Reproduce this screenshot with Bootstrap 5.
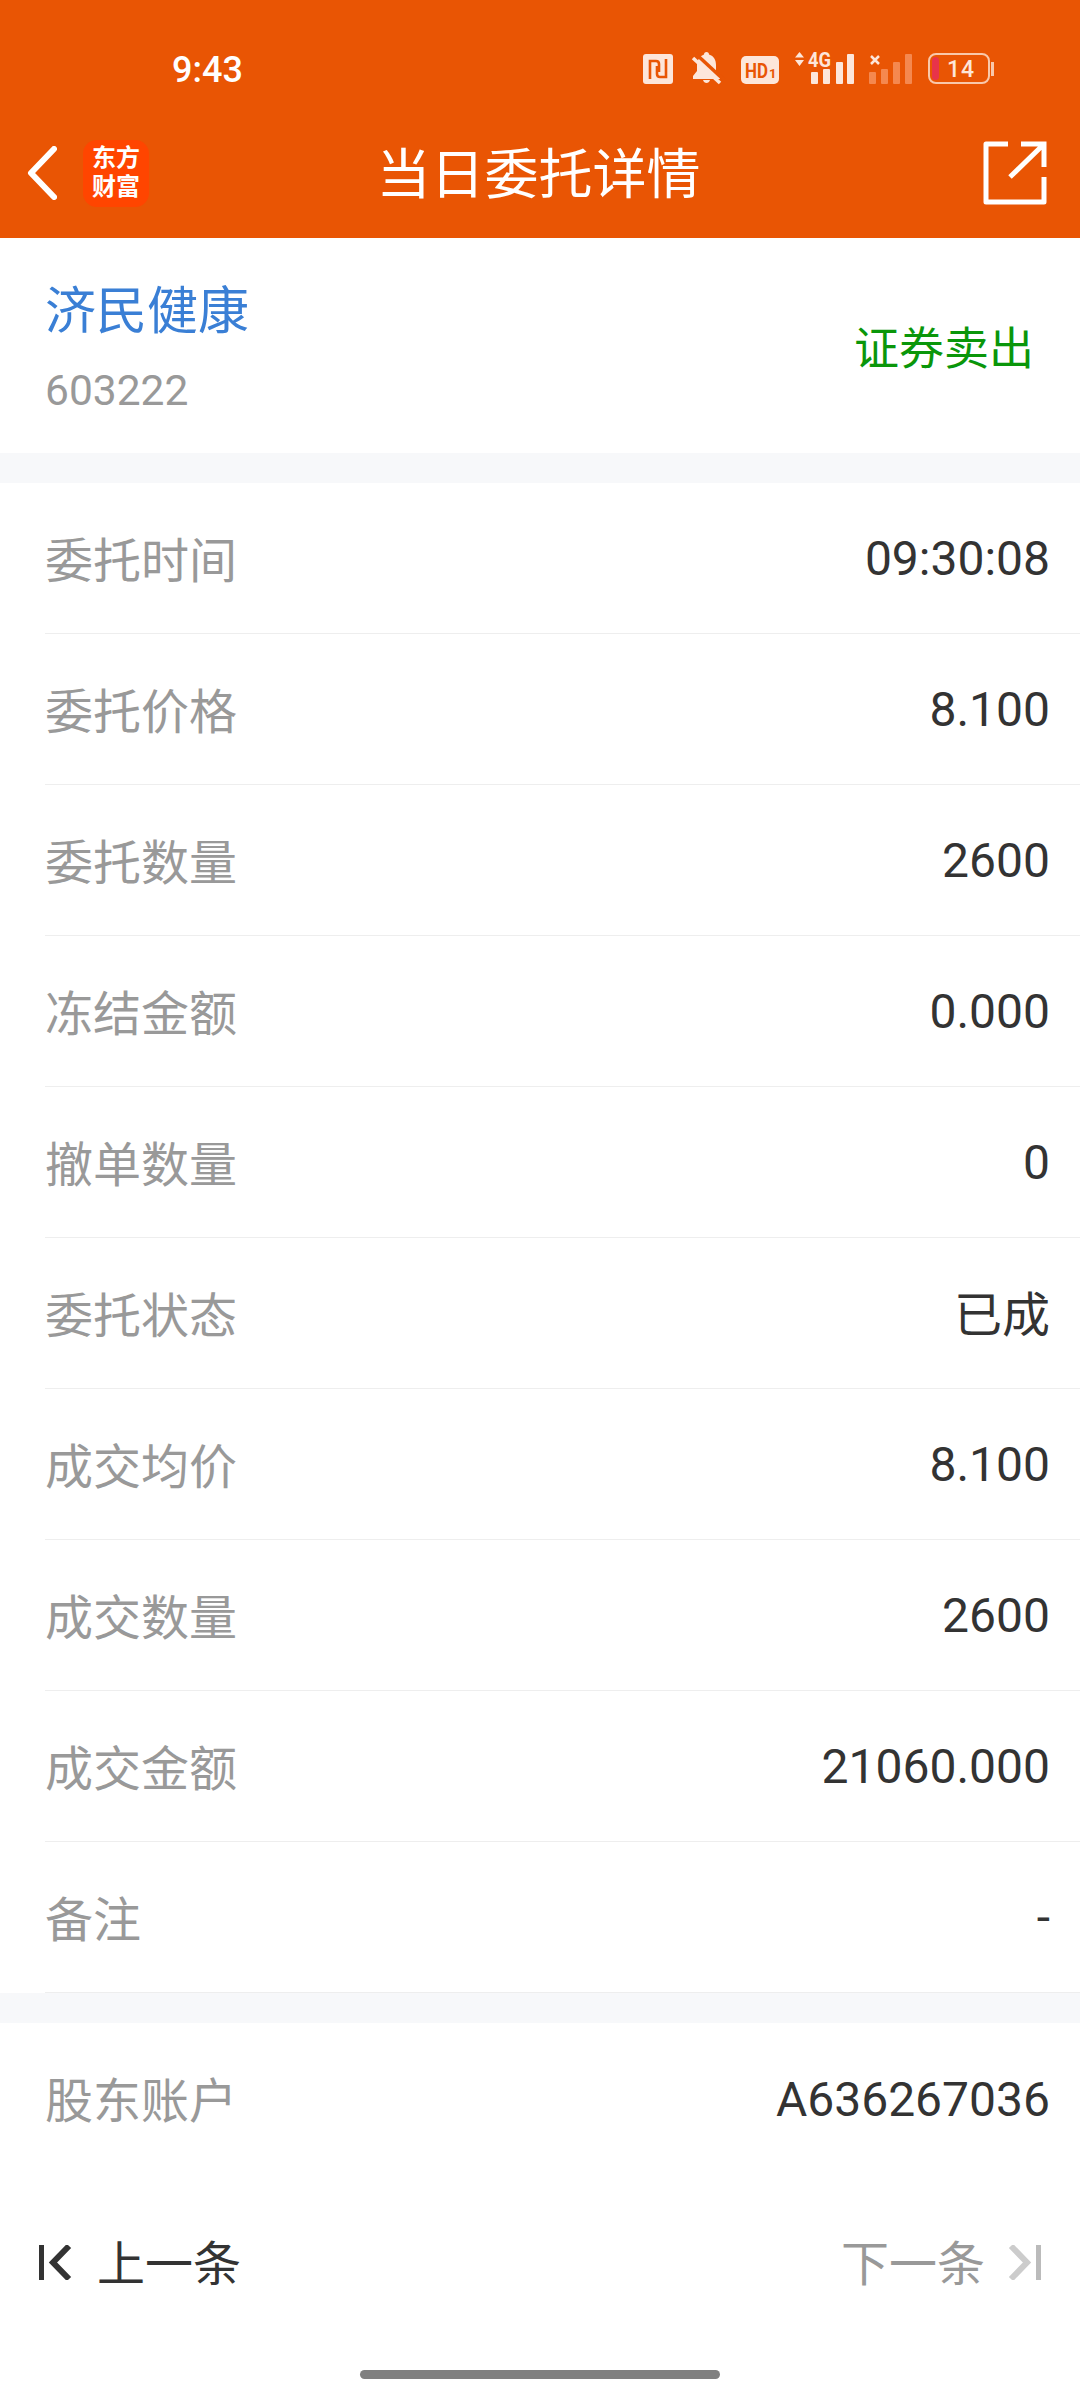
<!DOCTYPE html>
<html lang="zh-CN">
<head>
    <meta charset="UTF-8">
    <meta name="viewport" content="width=device-width, initial-scale=1.0">
    <title>当日委托详情</title>
    <link href="https://cdn.jsdelivr.net/npm/bootstrap@5.3.0/dist/css/bootstrap.min.css" rel="stylesheet">
    <style>
        body {
            font-family: Roboto, "Noto Sans CJK SC", sans-serif;
            background: #fff;
            color: #333;
        }
        .top-area { background: #e95504; color: #fff; }
        .status-bar { height: 108px; padding: 32px 86px 0 172px; }
        .status-inner { height: 76px; }
        .status-time { font-size: 36px; font-weight: 500; line-height: 1; }
        .status-icons { gap: 16px; margin-bottom: 4px; }
        .status-icons svg { display: block; overflow: visible; }
        .status-icons .gap-wide { margin-left: 2px; }
        .status-icons .gap-tight { margin-left: -1px; }
        .nav-bar { height: 130px; padding: 0 33px 0 27px; }
        .nav-side { flex: 1 1 0; }
        .nav-title { font-size: 54px; line-height: 1; padding-top: 6px; margin-left: 3px; }
        .brand-logo {
            width: 66px; height: 67px; margin-left: 26px;
            background: #ff4500; border-radius: 14px;
            font-size: 24px; font-weight: 700; line-height: 29px;
        }
        .stock-head { height: 215px; padding: 0 46px 0 45px; }
        .stock-name { font-size: 51px; color: #3a7fd5; line-height: 60px; margin-top: 44px; }
        .stock-code { font-size: 42.5px; color: #999; line-height: 50px; margin-top: 24px; }
        .stock-side { font-size: 45px; color: #0a960a; line-height: 1; margin-top: 7px; }
        .band { height: 30px; background: #f7f8fa; }
        .detail-list { --bs-list-group-border-width: 0; --bs-list-group-item-padding-x: 0; --bs-list-group-item-padding-y: 0; }
        .detail-row {
            height: 151px; margin-left: 45px; padding-right: 30px; padding-top: 2px;
            border-bottom: 1px solid #eeeeee !important;
            font-size: 48px; line-height: 1; color: #333;
        }
        .detail-row.no-line { border-bottom: 0 !important; }
        .detail-label { color: #999; padding-top: 5px; }
        .detail-cjk { padding-top: 3px; }
        .pager { height: 177px; padding: 0 39px; font-size: 48px; line-height: 1; }
        .pager-text { padding-top: 4px; }
        .pager-prev .pager-text { margin-left: 25px; }
        .pager-next { color: #999; }
        .pager-next .pager-text { margin-right: 23px; }
        .home-bar { width: 360px; height: 9px; margin: 19px auto 0; background: #808080; border-radius: 5px; }
    </style>
</head>
<body>
    <div class="top-area">
        <div class="status-bar">
            <div class="status-inner d-flex justify-content-between align-items-center">
                <div class="status-time">9:43</div>
                <div class="status-icons d-flex align-items-end">
                    <!-- nfc -->
                    <svg width="30" height="30" viewBox="0 0 30 30">
                        <rect width="30" height="30" rx="3" fill="#fde6da"/>
                        <path d="M7 25V7H13Q16 7 16 10V18M23 5V23H17Q14 23 14 20V12" fill="none" stroke="#e95504" stroke-width="2.600"/>
                    </svg>
                    <!-- muted bell -->
                    <svg class="gap-wide" width="32" height="32" viewBox="0 0 32 32">
                        <path fill="#fde6da" d="M15.500 0A2.500 2.500 0 0 1 18 2.500C23 4 25 8 25 13V19L29 24V27H2V24L6 19V13C6 8 9 4 13 2.500A2.500 2.500 0 0 1 15.500 0ZM12 28H19C18 32 13 32 12 28Z"/>
                        <path d="M5 2 33 28" stroke="#e95504" stroke-width="3.500"/>
                        <path d="M2 6 29 31" stroke="#fde6da" stroke-width="3.500"/>
                    </svg>
                    <!-- hd -->
                    <svg class="gap-wide" width="38" height="28" viewBox="0 0 38 28">
                        <rect width="38" height="28" rx="5" fill="#fde6da"/>
                        <text x="4" y="22" font-family="Roboto" font-size="21" font-weight="700" fill="#e95504" textLength="23" lengthAdjust="spacingAndGlyphs">HD</text>
                        <text x="28" y="22" font-family="Roboto" font-size="13" font-weight="700" fill="#e95504">1</text>
                    </svg>
                    <!-- sim 1 signal -->
                    <svg width="59" height="32" viewBox="0 0 59 32">
                        <path fill="#fde6da" d="M4.500 0 9 5.500H0ZM0 8H9L4.500 14Z"/>
                        <text x="13" y="15" font-family="Roboto" font-size="20" font-weight="700" fill="#fde6da" textLength="23" lengthAdjust="spacingAndGlyphs">4G</text>
                        <rect x="16" y="20" width="7" height="12" rx="1" fill="#fde6da"/>
                        <rect x="28" y="17" width="7" height="15" rx="1" fill="#fde6da"/>
                        <rect x="41" y="10" width="7" height="22" rx="1" fill="#fde6da"/>
                        <rect x="52" y="2" width="7" height="30" rx="1" fill="#fde6da"/>
                    </svg>
                    <!-- sim 2 signal, no service -->
                    <svg class="gap-tight" width="43" height="30" viewBox="0 0 43 30">
                        <path stroke="#fde6da" stroke-width="2.500" d="M2 2 10 10M10 2 2 10"/>
                        <g fill="#f5884f">
                            <rect x="0" y="18" width="7" height="12" rx="1"/>
                            <rect x="12" y="15" width="7" height="15" rx="1"/>
                            <rect x="24" y="8" width="7" height="22" rx="1"/>
                            <rect x="36" y="0" width="7" height="30" rx="1"/>
                        </g>
                    </svg>
                    <!-- battery -->
                    <svg width="66" height="31" viewBox="0 0 66 31">
                        <rect x="1" y="1" width="60" height="29" rx="7" fill="none" stroke="#f9c8ab" stroke-width="2"/>
                        <rect x="4" y="4" width="7" height="23" rx="3.500" fill="#e8334a"/>
                        <text x="19" y="24" font-family="Roboto" font-size="23" font-weight="500" letter-spacing="1" fill="#fde6da">14</text>
                        <path fill="#f9c8ab" d="M63 9h3v14h-3Z"/>
                    </svg>
                </div>
            </div>
        </div>
        <nav class="nav-bar d-flex align-items-center">
            <div class="nav-side d-flex align-items-center">
                <svg width="30" height="54" viewBox="0 0 30 54">
                    <path d="M27 3 4 27 27 51" fill="none" stroke="#fff" stroke-width="6" stroke-linecap="round" stroke-linejoin="round"/>
                </svg>
                <div class="brand-logo d-flex flex-column align-items-center justify-content-center">
                    <span>东方</span>
                    <span>财富</span>
                </div>
            </div>
            <div class="nav-title">当日委托详情</div>
            <div class="nav-side d-flex justify-content-end">
                <svg width="64" height="64" viewBox="0 0 64 64">
                    <path d="M25 3H3V61H61V36" fill="none" stroke="#fff" stroke-width="5" stroke-linejoin="round"/>
                    <path d="M27 36 60 4M38 3H61V26" fill="none" stroke="#fff" stroke-width="5"/>
                </svg>
            </div>
        </nav>
    </div>

    <div class="stock-head d-flex justify-content-between align-items-center">
        <div class="align-self-start">
            <div class="stock-name">济民健康</div>
            <div class="stock-code">603222</div>
        </div>
        <div class="stock-side">证券卖出</div>
    </div>
    <div class="band"></div>

    <div class="list-group list-group-flush detail-list">
        <div class="list-group-item detail-row d-flex justify-content-between align-items-center"><span class="detail-label">委托时间</span><span>09:30:08</span></div>
        <div class="list-group-item detail-row d-flex justify-content-between align-items-center"><span class="detail-label">委托价格</span><span>8.100</span></div>
        <div class="list-group-item detail-row d-flex justify-content-between align-items-center"><span class="detail-label">委托数量</span><span>2600</span></div>
        <div class="list-group-item detail-row d-flex justify-content-between align-items-center"><span class="detail-label">冻结金额</span><span>0.000</span></div>
        <div class="list-group-item detail-row d-flex justify-content-between align-items-center"><span class="detail-label">撤单数量</span><span>0</span></div>
        <div class="list-group-item detail-row d-flex justify-content-between align-items-center"><span class="detail-label">委托状态</span><span class="detail-cjk">已成</span></div>
        <div class="list-group-item detail-row d-flex justify-content-between align-items-center"><span class="detail-label">成交均价</span><span>8.100</span></div>
        <div class="list-group-item detail-row d-flex justify-content-between align-items-center"><span class="detail-label">成交数量</span><span>2600</span></div>
        <div class="list-group-item detail-row d-flex justify-content-between align-items-center"><span class="detail-label">成交金额</span><span>21060.000</span></div>
        <div class="list-group-item detail-row d-flex justify-content-between align-items-center"><span class="detail-label">备注</span><span>-</span></div>
    </div>
    <div class="band"></div>
    <div class="list-group list-group-flush detail-list">
        <div class="list-group-item detail-row no-line d-flex justify-content-between align-items-center"><span class="detail-label">股东账户</span><span>A636267036</span></div>
    </div>

    <div class="pager d-flex justify-content-between align-items-center">
        <div class="pager-prev d-flex align-items-center">
            <svg width="33" height="35" viewBox="0 0 33 35">
                <path d="M2.500 0V35" stroke="#333" stroke-width="5"/>
                <path d="M30 1 14 17.500 30 34" fill="none" stroke="#333" stroke-width="6"/>
            </svg>
            <span class="pager-text">上一条</span>
        </div>
        <div class="pager-next d-flex align-items-center">
            <span class="pager-text">下一条</span>
            <svg width="33" height="35" viewBox="0 0 33 35">
                <path d="M3 1 19 17.500 3 34" fill="none" stroke="#cccccc" stroke-width="6"/>
                <path d="M30.500 0V35" stroke="#bbbbbb" stroke-width="5"/>
            </svg>
        </div>
    </div>
    <div class="home-bar"></div>

    <script src="https://cdn.jsdelivr.net/npm/bootstrap@5.3.0/dist/js/bootstrap.bundle.min.js"></script>
</body>
</html>
